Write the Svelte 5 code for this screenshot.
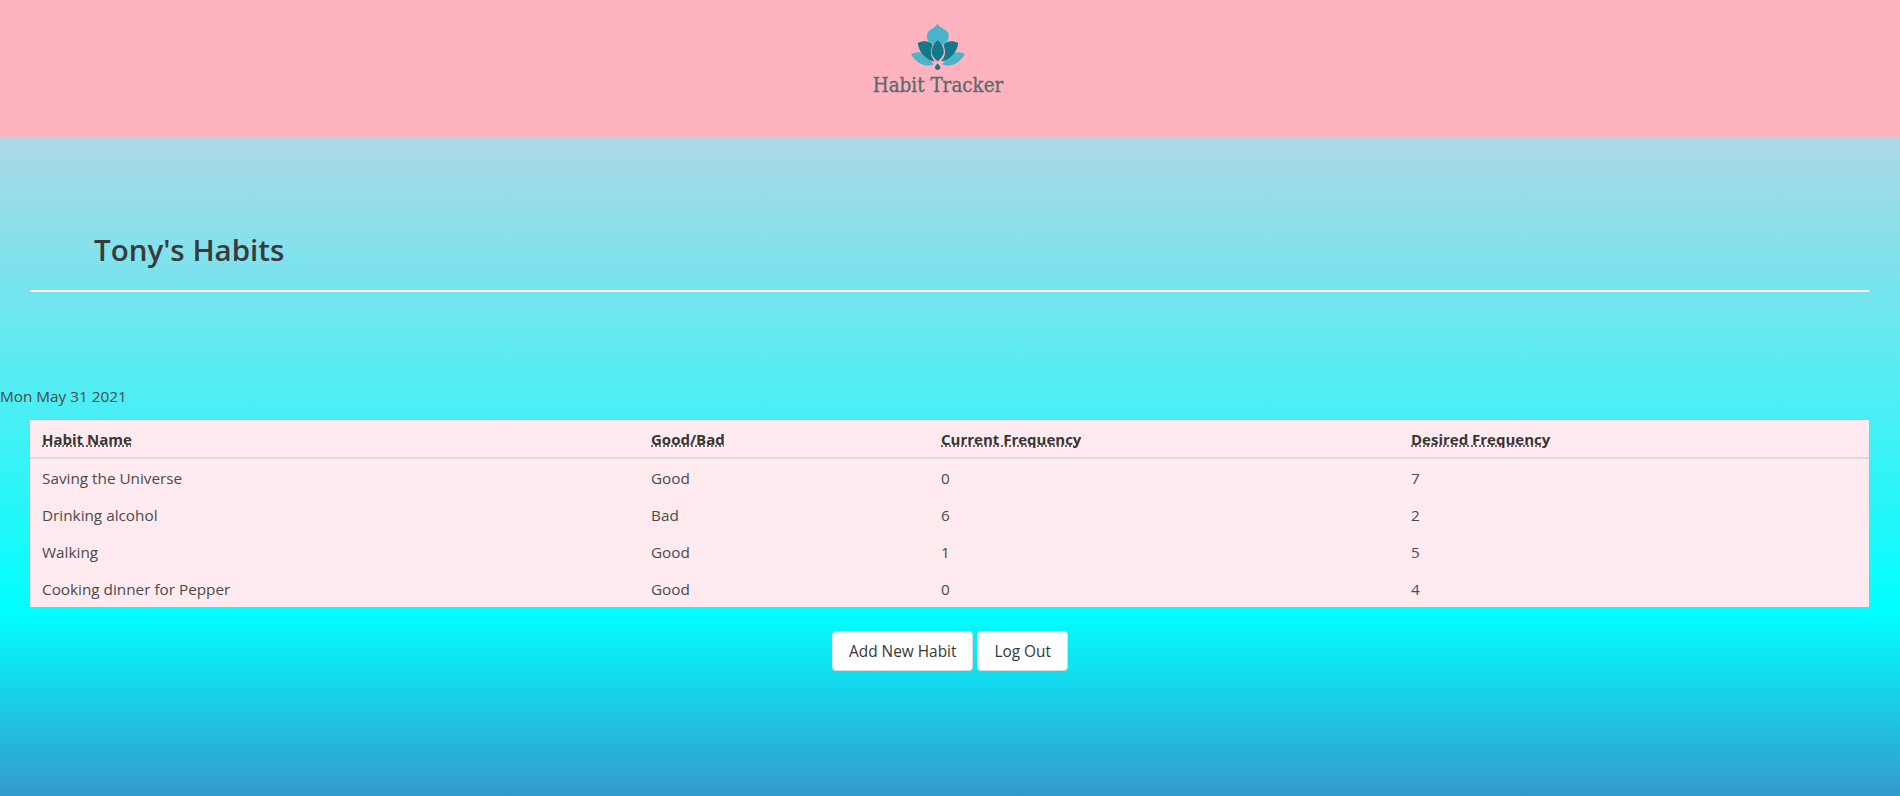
<script>
  const habits = [
    { name: 'Saving the Universe', kind: 'Good', current: 0, desired: 7 },
    { name: 'Drinking alcohol', kind: 'Bad', current: 6, desired: 2 },
    { name: 'Walking', kind: 'Good', current: 1, desired: 5 },
    { name: 'Cooking dinner for Pepper', kind: 'Good', current: 0, desired: 4 }
  ];
</script>

<header class="banner">
  <div class="logo">
    <svg width="54" height="46" viewBox="185 42 160 136" aria-hidden="true">
      <path class="light" d="M263 42C255 56 232 58 232 78C232 90 238 98 246 102H282C290 98 297 88 297 76C297 58 272 56 263 42Z" />
      <path class="light" d="M185 131C200 124 216 124 226 132C236 140 246 150 252 162C232 170 204 164 185 131Z" />
      <path class="light" d="M345 131C330 124 314 124 304 132C294 140 284 150 278 162C298 170 326 164 345 131Z" />
      <path class="dark" d="M205 98C222 90 242 92 249 104C241 122 243 138 256 153C226 148 208 124 205 98Z" />
      <path class="dark" d="M325 98C308 90 288 92 281 104C289 122 287 138 274 153C304 148 322 124 325 98Z" />
      <path class="core" d="M264 90C253 99 246 110 246 124C246 136 256 146 264 152C272 146 282 136 282 124C282 110 275 99 264 90Z" />
      <path class="core" d="M264 158C259 164 256 168 256 171C256 175 260 178 264 178C268 178 272 175 272 171C272 168 269 164 264 158Z" />
    </svg>
    <span class="logo-name">Habit Tracker</span>
  </div>
</header>

<main class="page">
  <h2>Tony's Habits</h2>
  <hr />
  <p class="date">Mon May 31 2021</p>
  <div class="table-wrap">
    <table>
      <thead>
        <tr>
          <th class="col-name"><abbr>Habit Name</abbr></th>
          <th class="col-kind"><abbr>Good/Bad</abbr></th>
          <th class="col-freq"><abbr>Current Frequency</abbr></th>
          <th class="col-freq"><abbr>Desired Frequency</abbr></th>
        </tr>
      </thead>
      <tbody>
        {#each habits as habit}
          <tr>
            <td>{habit.name}</td>
            <td>{habit.kind}</td>
            <td>{habit.current}</td>
            <td>{habit.desired}</td>
          </tr>
        {/each}
      </tbody>
    </table>
  </div>
  <div class="actions">
    <button type="button">Add New Habit</button>
    <button type="button">Log Out</button>
  </div>
</main>

<style>
  :global(body) {
    font-family: "Open Sans", "Noto Sans", sans-serif;
    color: #363636;
  }

  .banner {
    height: 137px;
    background: #ffb3bf;
    display: flex;
    justify-content: center;
    padding-right: 24px;
  }

  .logo {
    display: flex;
    flex-direction: column;
    align-items: center;
    padding-top: 24px;
  }

  .logo svg {
    display: block;
  }

  .logo-name {
    font-family: "DejaVu Serif", serif;
    font-stretch: condensed;
    font-size: 20.4px;
    line-height: 24px;
    color: #5a6a6e;
    -webkit-text-stroke: 0.3px #5a6a6e;
    margin-top: 3px;
  }

  .light { fill: #4ab4cb; }

  .dark {
    fill: #14788c;
    stroke: #ffb3bf;
    stroke-width: 2px;
    paint-order: stroke;
  }

  .core { fill: #14788c; }

  .page {
    height: 659px;
    box-sizing: border-box;
    padding-top: 93px;
    background: linear-gradient(#add8e6 0%, #00ffff 72%, #339acc 100%);
  }

  h2 {
    margin: 0 0 0 94px;
    font-size: 29.5px;
    line-height: 40px;
    font-weight: 600;
    color: #3a3a3a;
  }

  hr {
    margin: 20px 31px 0 30px;
    border: 0;
    height: 2px;
    background: #fff;
  }

  .date {
    margin: 94px 0 0;
    font-size: 15.3px;
    line-height: 21px;
    color: #4a4a4a;
  }

  .table-wrap {
    margin: 13px 31px 0 30px;
  }

  table {
    width: 100%;
    table-layout: fixed;
    border-collapse: collapse;
    background: #ffebef;
    font-size: 15.3px;
    line-height: 21px;
  }

  th {
    box-sizing: border-box;
    text-align: left;
    padding: 9px 12px 7px;
    border-bottom: 2px solid #dbdbdb;
    font-size: 15px;
    font-weight: 700;
  }

  abbr {
    text-decoration: underline dotted;
  }

  td {
    padding: 9px 12px 7px;
    color: #4a4a4a;
  }

  .col-name { width: 609px; }
  .col-kind { width: 290px; }
  .col-freq { width: 470px; }

  .actions {
    display: flex;
    justify-content: center;
    gap: 4px;
    margin-top: 24px;
  }

  button {
    height: 40px;
    padding: 0 16px;
    background: #fff;
    border: 1px solid #dbdbdb;
    border-radius: 4px;
    font-family: inherit;
    font-size: 15.4px;
    color: #363636;
  }
</style>
